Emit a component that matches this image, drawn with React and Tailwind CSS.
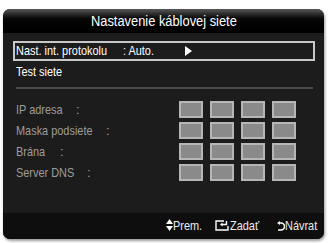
import React from "react";

const font = { fontFamily: '"Liberation Sans", Arial, sans-serif' };

function T({ children, className = "" }) {
  return (
    <span className={"inline-block whitespace-nowrap origin-left scale-x-[0.84] " + className}>{children}</span>
  );
}

function Boxes() {
  return (
    <div className="flex gap-[7px]">
      {[0, 1, 2, 3].map((i) => (
        <div key={i} className="w-[24px] h-[17px] bg-[#8a8a8a] border-2 border-[#b6b6b6]" />
      ))}
    </div>
  );
}

function Row({ label, colonLeft }) {
  return (
    <div className="flex items-center h-[17px]">
      <div className="relative w-[163px] h-[15px] text-[#9c9c9c] text-[13px] leading-[15px]">
        <T className="absolute left-0 top-0">{label}</T>
        <span className="absolute top-0" style={{ left: colonLeft }}>:</span>
      </div>
      <Boxes />
    </div>
  );
}

export default function App() {
  return (
    <div className="w-[331px] h-[243px] bg-white pt-[9px] pl-[3px]" style={font}>
      <div className="w-[321px] h-[230px] rounded-[7px] bg-[#1c1c1c] flex flex-col overflow-hidden shadow-[1px_2px_3px_rgba(0,0,0,0.4)]">
        <div className="h-[24px] flex items-center justify-center bg-gradient-to-b from-[#5a5a5a] via-[#080808] via-40% to-[#000] text-white text-[15.5px] leading-none">
          <span className="inline-block whitespace-nowrap scale-x-[0.83]">Nastavenie káblovej siete</span>
        </div>
        <div className="flex-1 flex flex-col pl-[10px] pr-[9px] pt-[8px]">
          <div className="relative h-[20px] border-2 border-[#c8c8c8] text-white text-[13px] leading-[16px]">
            <T className="absolute left-[1px] top-0">Nast. int. protokolu</T>
            <T className="absolute left-[108px] top-0">: Auto.</T>
            <svg width="7" height="10" viewBox="0 0 7 10" className="absolute left-[170px] top-[3px]"><path d="M0 0 L7 5 L0 10 Z" fill="#fff" /></svg>
          </div>
          <div className="h-[21px] flex items-center text-white text-[13px] leading-none pl-[3px]"><T>Test siete</T></div>
          <div className="mt-[5px] ml-[3px] mr-[2px] h-[2px] bg-[#4a4a4a]" />
          <div className="flex flex-col gap-[4px] mt-[12px] pl-[3px]">
            <Row label="IP adresa" colonLeft={60} />
            <Row label="Maska podsiete" colonLeft={90} />
            <Row label="Brána" colonLeft={44} />
            <Row label="Server DNS" colonLeft={71} />
          </div>
        </div>
        <div className="relative h-[26px] bg-[#0e0e0e] text-[#ececec] text-[13px] leading-[15px]">
          <svg width="7" height="12" viewBox="0 0 7 12" className="absolute left-[163px] top-[6px]"><path d="M3.5 0 L7 5 L0 5 Z M0 7 L7 7 L3.5 12 Z" fill="#fff" /></svg>
          <T className="absolute left-[170px] top-[5px]">Prem.</T>
          <svg width="14" height="11" viewBox="0 0 14 11" className="absolute left-[212px] top-[7px]">
            <path d="M9 1 H1 V10 H13 V6" fill="none" stroke="#fff" strokeWidth="1.4" />
            <path d="M11.5 1 V4.5 H6.5" fill="none" stroke="#fff" strokeWidth="1.4" />
            <path d="M7.5 2.5 L5 4.5 L7.5 6.5 Z" fill="#fff" />
          </svg>
          <T className="absolute left-[227px] top-[5px]">Zadať</T>
          <svg width="8" height="10" viewBox="0 0 8 10" className="absolute left-[274px] top-[8px]">
            <path d="M2 2 H4 A3 3 0 0 1 4 9 H1" fill="none" stroke="#fff" strokeWidth="1.5" />
            <path d="M3 0 L0 2 L3 4 Z" fill="#fff" />
          </svg>
          <T className="absolute left-[282px] top-[5px]">Návrat</T>
        </div>
      </div>
    </div>
  );
}
